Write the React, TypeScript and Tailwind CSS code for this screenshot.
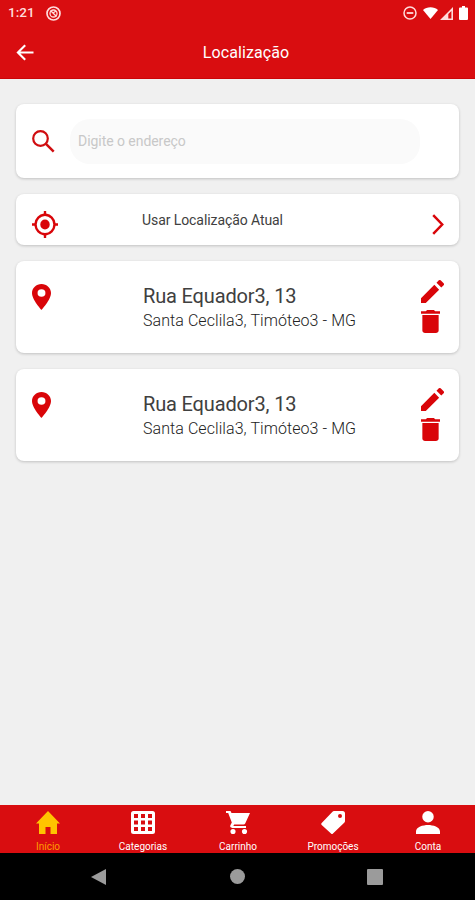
import type { ReactNode } from 'react';

const ADDRESSES = [
  { id: 1, street: 'Rua Equador3, 13', city: 'Santa Ceclila3, Timóteo3 - MG' },
  { id: 2, street: 'Rua Equador3, 13', city: 'Santa Ceclila3, Timóteo3 - MG' },
];

interface IconProps {
  className?: string;
  viewBox?: string;
  children: ReactNode;
}

function Icon({ className = '', viewBox = '0 0 24 24', children }: IconProps) {
  return (
    <svg className={`block shrink-0 ${className}`} viewBox={viewBox} fill="currentColor" preserveAspectRatio="none">
      {children}
    </svg>
  );
}

function StatusBar() {
  return (
    <div className="flex h-[26px] items-center pl-2 pr-[7px] text-[#ffdcdc]">
      <span className="w-[38px] text-[13.5px] leading-none font-medium">1:21</span>
      <Icon className="h-[15px] w-[15px]" viewBox="0 0 15 15">
        <circle cx="7.5" cy="7.5" r="6.500" fill="none" stroke="currentColor" strokeWidth="1.700" />
        <circle cx="7.5" cy="7.5" r="3.500" fill="none" stroke="currentColor" strokeWidth="1.300" />
        <path d="M4.500 4.500l6 6M7 7l3-2" fill="none" stroke="currentColor" strokeWidth="1.400" />
      </Icon>
      <div className="ml-auto flex items-center">
        <Icon className="mr-[6px] h-[14px] w-[14px]" viewBox="0 0 14 14">
          <circle cx="7" cy="7" r="6" fill="none" stroke="currentColor" strokeWidth="1.500" />
          <path d="M3.700 6.100h6.600v1.800H3.700z" />
        </Icon>
        <Icon className="mr-[2px] h-[12px] w-[15px] text-white" viewBox="0 0 16 12">
          <path d="M0 3C4-.6 12-.6 16 3L8 12z" />
        </Icon>
        <Icon className="mr-[6px] h-[13px] w-[13px]" viewBox="0 0 13 13">
          <path d="M13 0v13H0zM11.400 4L8.300 7.100v4.400h3.100z" fillRule="evenodd" />
        </Icon>
        <Icon className="h-[14px] w-[9px] text-white" viewBox="0 0 9 14">
          <path d="M3 0h3v1.500h2q1 0 1 1V13q0 1-1 1H1q-1 0-1-1V2.500q0-1 1-1h2z" />
        </Icon>
      </div>
    </div>
  );
}

function Header() {
  return (
    <header className="h-[79px] shrink-0 border-b border-[#cb0508] bg-[#d90d10] text-white">
      <StatusBar />
      <div className="grid h-[52px] grid-cols-[1fr_auto_1fr] items-center pl-4">
        <Icon className="h-[17px] w-[18px]" viewBox="0 0 18 17">
          <path d="M17.500 8.500H2M9.200 1.200L1.900 8.500l7.300 7.300" fill="none" stroke="currentColor" strokeWidth="2.100" />
        </Icon>
        <h1 className="pt-[2px] pl-px text-[16px] leading-none tracking-[0.1px]">Localização</h1>
      </div>
    </header>
  );
}

function Card({ className = '', children }: { className?: string; children: ReactNode }) {
  return (
    <div className={`flex rounded-lg bg-white shadow-[0_1px_3px_rgba(0,0,0,0.2)] ${className}`}>{children}</div>
  );
}

function AddressCard({ street, city }: { street: string; city: string }) {
  return (
    <Card className="h-[92px] pl-4 pr-4">
      <Icon className="mt-[23px] h-[26px] w-[19px] text-[#d90509]" viewBox="5 2 14 20">
        <path d="M12 2C8.130 2 5 5.130 5 9c0 5.250 7 13 7 13s7-7.750 7-13c0-3.870-3.130-7-7-7zm0 9.900a2.900 2.900 0 1 1 0-5.800 2.900 2.900 0 0 1 0 5.800z" />
      </Icon>
      <div className="ml-[92px] flex-1 pt-[23px]">
        <p className="text-[20px] leading-[25px] tracking-[-0.15px] text-[#404040]">{street}</p>
        <p className="text-[16px] leading-[24px] font-light tracking-[0.07px] text-[#222]">{city}</p>
      </div>
      <div className="flex w-[22px] flex-col pt-[19px] text-[#d90509]">
        <Icon className="h-[23px] w-[23px]" viewBox="3 3 18 18">
          <path d="M3 17.250V21h3.750L17.200 10.550l-3.750-3.750L3 17.250zM20.710 7.040a1 1 0 0 0 0-1.410l-2.340-2.340a1 1 0 0 0-1.410 0l-1.830 1.830 3.750 3.750 1.830-1.830z" />
        </Icon>
        <Icon className="mt-[7px] h-[23px] w-[19px]" viewBox="5 3 14 18">
          <path d="M6 19c0 1.100.9 2 2 2h8c1.100 0 2-.9 2-2V7H6v12zM19 4h-3.500l-1-1h-5l-1 1H5v2h14V4z" />
        </Icon>
      </div>
    </Card>
  );
}

const TABS = [
  {
    label: 'Início',
    active: true,
    icon: <path d="M12 0L24 12.500h-3v10.500h-6.500v-7h-5v7H3v-10.500H0z" />,
  },
  {
    label: 'Categorias',
    icon: (
      <path
        fillRule="evenodd"
        d="M2.500 0h19Q24 0 24 2.500v18q0 2.500-2.500 2.500h-19Q0 23 0 20.500v-18Q0 0 2.500 0zM3 3v4h4V3zM10 3v4h4V3zM17 3v4h4V3zM3 9.500v4h4v-4zM10 9.500v4h4v-4zM17 9.500v4h4v-4zM3 16v4h4v-4zM10 16v4h4v-4zM17 16v4h4v-4z"
      />
    ),
  },
  {
    label: 'Carrinho',
    icon: (
      <path
        d="M0 0h4.500l1 2H24l-4.800 10.500q-.5 1-1.700 1H8.200L7.300 15H20v2H6.200q-3-.4-1.700-3l1.300-2.600L2.200 2H0zM7 18a2.600 2.600 0 1 1 0 5.200A2.600 2.600 0 0 1 7 18zM18.500 18a2.600 2.600 0 1 1 0 5.200 2.600 2.600 0 0 1 0-5.200z"
      />
    ),
  },
  {
    label: 'Promoções',
    icon: (
      <path
        fillRule="evenodd"
        d="M13 0h8.500Q24 0 24 2.500V10q0 1-.8 1.800L12 22.500q-1 1-2 0L.7 14q-1-1 0-2L11.500.8Q12 0 13 0zM19 3a2 2 0 1 0 0 4 2 2 0 0 0 0-4z"
      />
    ),
  },
  {
    label: 'Conta',
    icon: <path d="M12 0a5.700 5.700 0 1 1 0 11.500A5.700 5.700 0 0 1 12 0zM0 23v-2.500C0 16 7 14 12 14s12 2 12 6.500V23z" />,
  },
];

function TabBar() {
  return (
    <nav className="grid h-[48px] shrink-0 grid-cols-5 bg-[#d90d10] pt-[6px]">
      {TABS.map((tab) => (
        <div
          key={tab.label}
          className={`flex flex-col items-center pl-px ${tab.active ? 'text-[#ffc400]' : 'text-white'}`}
        >
          <Icon className="h-[23px] w-[24px]" viewBox="0 0 24 23">{tab.icon}</Icon>
          <span className={`mt-[7px] text-[10px] leading-[12px] ${tab.active ? 'text-[#ff9d00]' : ''}`}>{tab.label}</span>
        </div>
      ))}
    </nav>
  );
}

function SystemNav() {
  return (
    <div className="flex h-[47px] shrink-0 items-center justify-between bg-black pl-[91px] pr-[92px] text-[#9b9b9b]">
      <Icon className="h-4 w-[15px]" viewBox="0 0 15 16">
        <path d="M15 0v16L0 8z" />
      </Icon>
      <div className="ml-[16px] h-[15px] w-[15px] rounded-full bg-[#9b9b9b]" />
      <div className="ml-[15px] h-4 w-4 rounded-[1px] bg-[#9b9b9b]" />
    </div>
  );
}

export default function App() {
  return (
    <div className="flex h-[900px] w-[475px] flex-col overflow-hidden bg-[#f0f0f0] font-['Roboto',sans-serif]">
      <Header />
      <main className="flex flex-1 flex-col gap-4 px-4 pt-[25px]">
        <Card className="h-[74px] items-center pl-4">
          <Icon className="h-[23px] w-[23px] text-[#d00d10]" viewBox="0 0 23 23">
            <circle cx="8.500" cy="8.500" r="7.300" fill="none" stroke="currentColor" strokeWidth="2.200" />
            <path d="M13.700 13.700l8 8" fill="none" stroke="currentColor" strokeWidth="2.500" />
          </Icon>
          <input
            className="ml-[15px] h-[45px] w-[350px] rounded-[20px] bg-[#fafafa] px-2 text-[14px] tracking-[-0.05px] outline-none placeholder:text-[#c8c8c8]"
            placeholder="Digite o endereço"
          />
        </Card>
        <Card className="h-[51px] pl-4 pr-[15px]">
          <Icon className="mt-[17px] h-[27px] w-[26px] text-[#d90509]" viewBox="1 1 22 22">
            <path d="M12 8a4 4 0 1 0 0 8 4 4 0 0 0 0-8zm8.940 3A8.994 8.994 0 0 0 13 3.060V1h-2v2.060A8.994 8.994 0 0 0 3.060 11H1v2h2.060A8.994 8.994 0 0 0 11 20.940V23h2v-2.060A8.994 8.994 0 0 0 20.940 13H23v-2h-2.060zM12 19a7 7 0 1 1 0-14 7 7 0 0 1 0 14z" />
          </Icon>
          <span className="ml-[84px] flex-1 pt-[18px] text-[14px] leading-[16px] tracking-[-0.08px] text-[#404040]">
            Usar Localização Atual
          </span>
          <Icon className="mt-[20px] h-[21px] w-[12px] text-[#d90509]" viewBox="0 0 12 21">
            <path d="M1.200 1.200l9 9.300-9 9.300" fill="none" stroke="currentColor" strokeWidth="2.500" />
          </Icon>
        </Card>
        {ADDRESSES.map((address) => (
          <AddressCard key={address.id} street={address.street} city={address.city} />
        ))}
      </main>
      <TabBar />
      <SystemNav />
    </div>
  );
}
